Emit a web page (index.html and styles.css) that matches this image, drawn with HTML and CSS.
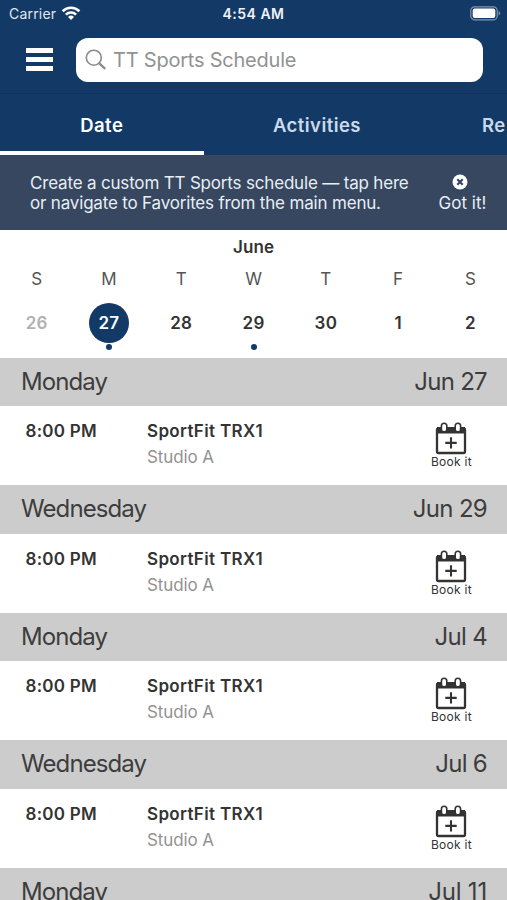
FILE: index.html
```html
<!DOCTYPE html>
<html lang="en">
<head>
<meta charset="utf-8">
<title>TT Sports Schedule</title>
<link rel="stylesheet" href="styles.css">
</head>
<body>
<svg class="defs" width="0" height="0" aria-hidden="true">
  <symbol id="book" viewBox="0 0 32 34">
    <rect x="2" y="7.5" width="28" height="24.5" rx="1.5" fill="#fff" stroke="#333" stroke-width="2.3"/>
    <path d="M2 6h28v6.5H2z" fill="#333"/>
    <rect x="6.4" y="2.3" width="5.4" height="8.6" rx="2.7" fill="#fff" stroke="#333" stroke-width="1.6"/>
    <rect x="20.2" y="2.3" width="5.4" height="8.6" rx="2.7" fill="#fff" stroke="#333" stroke-width="1.6"/>
    <path d="M16 16.2v11.4M10.3 21.9h11.4" stroke="#333" stroke-width="2.1"/>
  </symbol>
</svg>
<header class="top">
  <div class="status">
    <div class="carrier"><span class="carrier-name">Carrier</span>
      <svg width="20" height="16" viewBox="0 0 20 16" fill="none" stroke="#fff" stroke-width="2.6"><path d="M1.6 6.2a12 12 0 0 1 16.8 0M4.9 9.6a7.3 7.3 0 0 1 10.2 0"/><path d="M10 15l-3-3.1a4.3 4.3 0 0 1 6 0z" fill="#fff" stroke="none"/></svg>
    </div>
    <span class="clock">4:54 AM</span>
    <svg class="battery" width="31" height="15" viewBox="0 0 31 15"><rect x=".8" y=".8" width="26.4" height="13" rx="3.8" fill="none" stroke="#8195ae" stroke-width="1.2"/><rect x="2.7" y="2.6" width="22.6" height="9.4" rx="2" fill="#fff"/><path d="M28.6 5v4.6q1.6-.8 1.6-2.3t-1.6-2.3z" fill="#8195ae"/></svg>
  </div>
  <div class="searchbar">
    <div class="menu"><i></i><i></i><i></i></div>
    <div class="search">
      <svg width="22" height="22" viewBox="0 0 22 22" fill="none" stroke="#8b8b8b"><circle cx="8.8" cy="8.7" r="7.5" stroke-width="1.6"/><path d="M14 14.2l6.2 5.7" stroke-width="2.3"/></svg>
      <span class="placeholder">TT Sports Schedule</span>
    </div>
  </div>
</header>
<nav class="tabs">
  <div class="tab active"><span>Date</span></div>
  <div class="tab"><span>Activities</span></div>
  <div class="tab last"><span>Re</span></div>
</nav>
<section class="notice">
  <p>Create a custom TT Sports schedule — tap here<br>or navigate to Favorites from the main menu.</p>
  <div class="dismiss">
    <svg width="16" height="16" viewBox="0 0 16 16"><circle cx="8" cy="8" r="7.5" fill="#fff"/><path d="M5.3 5.3l5.4 5.4M10.7 5.3l-5.4 5.4" stroke="#36475f" stroke-width="2.2"/></svg>
    <span>Got it!</span>
  </div>
</section>
<section class="calendar">
  <div class="month">June</div>
  <div class="week names"><span>S</span><span>M</span><span>T</span><span>W</span><span>T</span><span>F</span><span>S</span></div>
  <div class="week days"><span class="past">26</span><span class="selected dot">27</span><span>28</span><span class="dot">29</span><span>30</span><span>1</span><span>2</span></div>
</section>
<main>
  <h2><span>Monday</span><span>Jun 27</span></h2>
  <article><b class="time">8:00 PM</b><div class="what"><b>SportFit TRX1</b><span>Studio A</span></div><div class="book"><svg><use href="#book"/></svg><span>Book it</span></div></article>
  <h2><span>Wednesday</span><span>Jun 29</span></h2>
  <article><b class="time">8:00 PM</b><div class="what"><b>SportFit TRX1</b><span>Studio A</span></div><div class="book"><svg><use href="#book"/></svg><span>Book it</span></div></article>
  <h2><span>Monday</span><span>Jul 4</span></h2>
  <article><b class="time">8:00 PM</b><div class="what"><b>SportFit TRX1</b><span>Studio A</span></div><div class="book"><svg><use href="#book"/></svg><span>Book it</span></div></article>
  <h2><span>Wednesday</span><span>Jul 6</span></h2>
  <article><b class="time">8:00 PM</b><div class="what"><b>SportFit TRX1</b><span>Studio A</span></div><div class="book"><svg><use href="#book"/></svg><span>Book it</span></div></article>
  <h2><span>Monday</span><span class="wide">Jul 11</span></h2>
</main>
</body>
</html>
```
FILE: styles.css
```css
* { box-sizing: border-box; }
html, body { height: 900px; overflow: hidden; }
body { margin: 0; width: 507px; background: #fff; color: #333; font-family: Inter, "Liberation Sans", sans-serif; white-space: nowrap; }
svg { display: block; flex: none; }
.defs { position: absolute; }
.top { height: 94px; background: #133a66; border-bottom: 1px solid #0f335c; }
.status { height: 28px; display: grid; grid-template-columns: 1fr auto 1fr; align-items: center; color: #fff; padding: 0 6px 0 9px; }
.carrier { display: flex; align-items: center; gap: 5px; }
.carrier svg { margin-top: -3px; }
.carrier-name { font-size: 14px; letter-spacing: .2px; color: #e1e7ee; margin-top: -1px; }
.clock { font-size: 14px; font-weight: 600; letter-spacing: .5px; margin: -1px 3px 0 0; color: #eef2f7; }
.battery { justify-self: end; margin-top: -1px; }
.searchbar { display: flex; align-items: center; height: 44px; margin-top: 9.5px; padding-left: 25.5px; }
.menu { display: grid; gap: 4px; width: 27px; }
.menu i { height: 4.7px; background: #fff; }
.search { display: flex; align-items: center; gap: 6px; width: 407px; height: 44px; margin-left: 23px; padding-left: 9.5px; border-radius: 12px; background: #fff; }
.placeholder { font-size: 20px; color: #929292; letter-spacing: -.22px; }
.tabs { display: flex; height: 61px; background: #133a66; overflow: hidden; }
.tab { flex: none; width: 203.5px; height: 61px; padding-top: 1px; line-height: 61px; text-align: center; font-size: 18.5px; font-weight: 600; letter-spacing: .45px; color: #cbdaeb; }
.active { color: #fff; border-bottom: 4px solid #fff; }
.tab:nth-child(2) { width: 227px; }
.last { text-align: left; padding-left: 51.5px; }
.notice { display: flex; height: 75px; padding: 18px 0 0 30px; background: #36475f; color: #e8eef5; font-size: 17px; line-height: 20px; }
.notice p { margin: 0; width: 402px; letter-spacing: -.18px; }
.dismiss { width: 61px; display: flex; flex-direction: column; align-items: center; }
.dismiss svg { margin: .5px 5px 3.5px 0; }
.calendar { height: 127.5px; padding-top: 7px; }
.month { text-align: center; font-size: 17px; font-weight: 600; line-height: 20px; letter-spacing: .1px; }
.week { display: grid; grid-template-columns: repeat(7, 72.3px); margin-left: .5px; text-align: center; }
.names { margin-top: 12px; font-size: 17px; line-height: 20px; color: #555; }
.days { margin-top: 14px; font-size: 17px; font-weight: 600; line-height: 40px; letter-spacing: .2px; justify-items: center; }
.days span { position: relative; width: 40px; height: 40px; }
.days .past { color: #b1b1b1; }
.selected { color: #fff; background: #133a66; border-radius: 50%; }
.dot::after { content: ""; position: absolute; left: 17px; top: 41px; width: 6px; height: 6px; border-radius: 50%; background: #133a66; }
h2 { margin: 0; height: 48.5px; padding: 0 20px 0 21px; display: flex; justify-content: space-between; line-height: 48px; background: #ccc; color: #3d3d3d; font-size: 24px; font-weight: 400; letter-spacing: -.9px; }
h2 span + span { letter-spacing: -.7px; }
h2 .wide { letter-spacing: -.2px; }
article { height: 79px; display: flex; padding: 15px 0 0 25.5px; font-size: 17px; line-height: 20px; }
article b { font-weight: 600; letter-spacing: .25px; }
.what b { letter-spacing: .35px; }
.time { width: 121.5px; }
.what { width: 271px; display: flex; flex-direction: column; gap: 6px; }
.what span { color: #929292; letter-spacing: -.1px; }
.book { width: 65px; display: flex; flex-direction: column; align-items: center; font-size: 12px; line-height: 14px; letter-spacing: .3px; }
.book span { margin-left: 2px; }
.book svg { width: 32px; height: 34px; }
```
